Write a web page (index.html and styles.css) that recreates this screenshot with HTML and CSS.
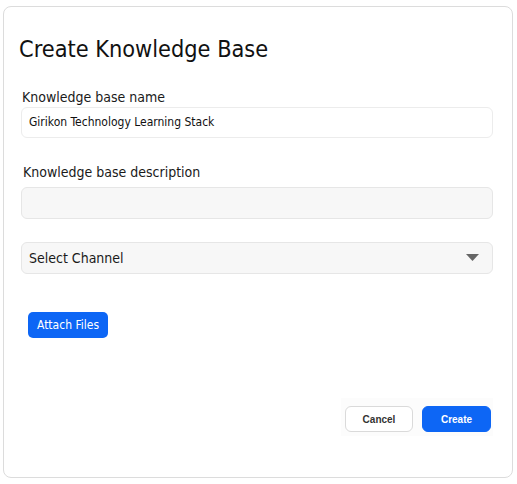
FILE: index.html
```
<!DOCTYPE html>
<html>
<head>
<meta charset="utf-8">
<link rel="stylesheet" href="styles.css">
</head>
<body>
<div class="card">
  <h1 class="title">Create Knowledge Base</h1>
  <div class="field">
    <label class="label">Knowledge base name</label>
    <div class="input input-white">Girikon Technology Learning Stack</div>
  </div>
  <div class="field field-desc">
    <label class="label label-desc">Knowledge base description</label>
    <div class="input input-gray"></div>
  </div>
  <div class="select">
    <span>Select Channel</span>
    <svg class="caret" width="13" height="8" viewBox="0 0 13 8"><path d="M0 0 H13 L6.5 7 Z" fill="#666"/></svg>
  </div>
  <div class="attach-row">
    <button class="btn-attach">Attach Files</button>
  </div>
  <div class="footer">
    <div class="actions">
      <button class="btn btn-cancel">Cancel</button>
      <button class="btn btn-create">Create</button>
    </div>
  </div>
</div>
</body>
</html>
```
FILE: styles.css
```
html, body {
  margin: 0;
  padding: 0;
  background: #fff;
}
body {
  padding: 6px 4px 6px 3px;
  font-family: "DejaVu Sans Condensed", "DejaVu Sans", sans-serif;
  color: #111;
}
.card {
  box-sizing: border-box;
  width: 510px;
  height: 472px;
  border: 1px solid #dcdcdc;
  border-radius: 8px;
  padding: 0 19px 0 17px;
  display: flex;
  flex-direction: column;
}
.title {
  margin: 28px 0 0 -2px;
  font-weight: normal;
  font-size: 23.3px;
  line-height: 28px;
  color: #111;
}
.field {
  margin-top: 26px;
  display: flex;
  flex-direction: column;
}
.field-desc {
  margin-top: 26px;
}
.label {
  font-size: 14px;
  line-height: 17px;
  padding-left: 1px;
  margin-bottom: 1px;
  color: #1a1a1a;
}
.label-desc {
  padding-left: 2px;
  margin-bottom: 6px;
}
.input {
  box-sizing: border-box;
  height: 31px;
  border: 1px solid #ececec;
  border-radius: 6px;
  font-size: 12px;
  line-height: 29px;
  padding-left: 7px;
  color: #111;
}
.input-white {
  background: #fff;
}
.input-gray {
  background: #f7f7f7;
  border-color: #e6e6e6;
  height: 32px;
}
.select {
  box-sizing: border-box;
  margin-top: 23px;
  height: 32px;
  background: #f7f7f7;
  border: 1px solid #e6e6e6;
  border-radius: 6px;
  display: flex;
  align-items: center;
  justify-content: space-between;
  padding: 0 13px 0 7px;
  font-size: 14px;
  color: #1a1a1a;
}
.caret {
  display: block;
}
.attach-row {
  margin-top: 38px;
  padding-left: 7px;
}
.btn-attach {
  height: 26px;
  width: 80px;
  background: #0d66f5;
  color: #fff;
  border: none;
  border-radius: 5px;
  font-family: "DejaVu Sans Condensed", "DejaVu Sans", sans-serif;
  font-size: 12px;
  padding: 0;
}
.footer {
  margin-top: 60px;
  display: flex;
  justify-content: flex-end;
}
.actions {
  display: flex;
  gap: 9px;
  padding: 8px 2px 4px 4px;
  background: #fcfcfc;
}
.btn {
  box-sizing: border-box;
  height: 26px;
  width: 68px;
  border-radius: 6px;
  font-family: "Liberation Sans", Arial, sans-serif;
  font-weight: bold;
  font-size: 10px;
  padding: 0;
}
.btn-cancel {
  background: #fff;
  border: 1px solid #dadada;
  color: #333;
}
.btn-create {
  width: 69px;
  background: #0d66f5;
  border: 1px solid #0d66f5;
  color: #fff;
}
```
